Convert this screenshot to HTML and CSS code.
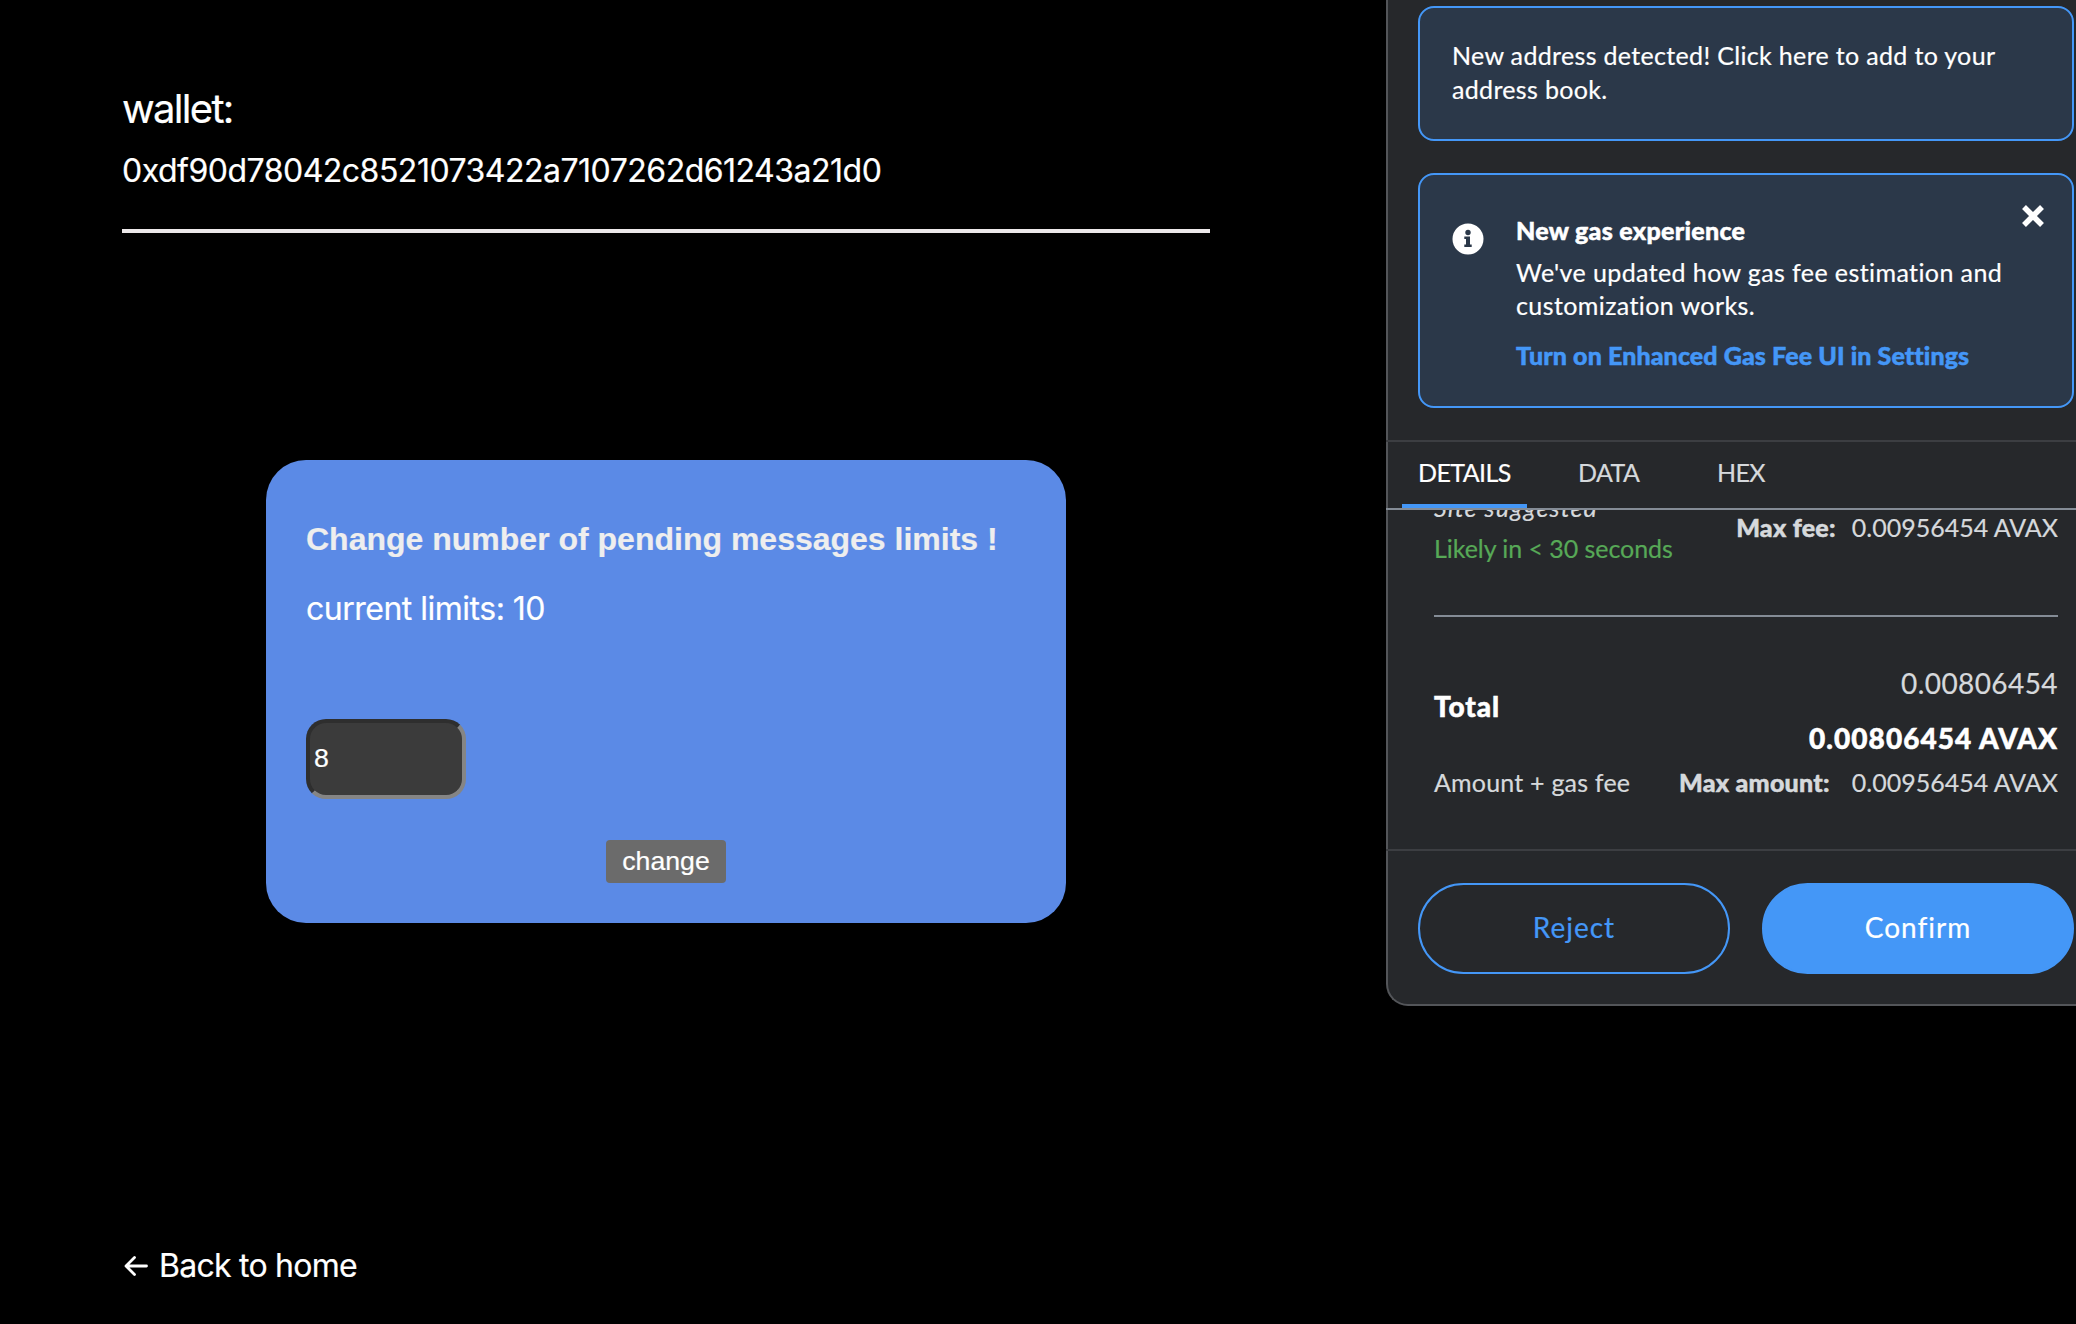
FILE: index.html
```html
<!DOCTYPE html>
<html lang="en">
<head>
<meta charset="utf-8">
<title>Change pending messages limit</title>
<link rel="stylesheet" href="styles.css">
</head>
<body>
<main class="page">
  <p class="wallet-label">wallet:</p>
  <p class="wallet-address">0xdf90d78042c8521073422a7107262d61243a21d0</p>
  <hr class="rule">
  <section class="card">
    <h1 class="card-title">Change number of pending messages limits !</h1>
    <p class="card-text">current limits: 10</p>
    <input class="limit-input" type="text" value="8">
    <button class="change-button">change</button>
  </section>
  <a class="back">
    <svg class="back-icon" viewBox="0 0 24 20"><path d="M10.500 1.500 2 10l8.500 8.500M2.500 10H22.500"/></svg>
    <span>Back to home</span>
  </a>
</main>
<aside class="panel">
  <div class="alert alert-address">New address detected! Click here to add to your<br>address book.</div>
  <div class="alert alert-gas">
    <svg class="info-icon" viewBox="0 0 32 32"><circle cx="16" cy="16" r="15.500" fill="#fff"/><circle cx="16" cy="9.500" r="2.700" fill="#2b3849"/><path fill="#2b3849" d="M12.300 13.500h5.700v8h1.700v2.500h-7.400v-2.500h1.700v-5.500h-1.700z"/></svg>
    <div class="gas-body">
      <h2 class="gas-title">New gas experience</h2>
      <p class="gas-text">We've updated how gas fee estimation and<br>customization works.</p>
      <a class="gas-link">Turn on Enhanced Gas Fee UI in Settings</a>
    </div>
    <svg class="close-icon" viewBox="0 0 24 24"><path d="M3 3l18 18M21 3l-18 18"/></svg>
  </div>
  <nav class="tabs">
    <a class="tab tab-active">DETAILS</a>
    <a class="tab tab-data">DATA</a>
    <a class="tab">HEX</a>
  </nav>
  <div class="details">
    <div class="fee-row">
      <div>
        <p class="suggested">Site suggested</p>
        <p class="likely">Likely in &lt; 30 seconds</p>
      </div>
      <p class="max max-fee"><b>Max fee:</b><span>0.00956454 AVAX</span></p>
    </div>
    <div class="total-row">
      <p class="total-label">Total</p>
      <div class="total-values">
        <p class="total-sub">0.00806454</p>
        <p class="total-main">0.00806454 AVAX</p>
      </div>
    </div>
    <div class="amount-row">
      <p class="amount-label">Amount + gas fee</p>
      <p class="max max-amount"><b>Max amount:</b><span>0.00956454 AVAX</span></p>
    </div>
  </div>
  <footer class="actions">
    <button class="action reject">Reject</button>
    <button class="action confirm">Confirm</button>
  </footer>
</aside>
</body>
</html>
```
FILE: styles.css
```css
* { box-sizing: border-box; }
body {
  margin: 0;
  width: 2076px;
  height: 1324px;
  display: flex;
  align-items: flex-start;
  overflow: hidden;
  background: #000;
  color: #fff;
  font-family: Inter, sans-serif;
}
p, h1, h2 { margin: 0; }
b { font-weight: 900; letter-spacing: 0.25px; }
b, .gas-title, .gas-link, .total-label, .total-main { -webkit-text-stroke: 0.5px currentColor; }
.page {
  flex: none;
  width: 1386px;
  height: 1324px;
  padding: 85px 176px 0 122px;
  -webkit-text-stroke: 0.2px currentColor;
}
.wallet-label { font-size: 40px; line-height: 48px; letter-spacing: -1.7px; }
.wallet-address { margin-top: 18px; font-size: 32px; line-height: 40px; letter-spacing: -0.5px; }
.rule { height: 4px; margin: 38px 0 0; border: 0; background: #ece8e9; }
.card {
  display: flex;
  flex-direction: column;
  align-items: flex-start;
  width: 800px;
  height: 463px;
  margin: 227px 0 0 144px;
  padding: 59px 40px 40px;
  border-radius: 40px;
  background: #5b8ae6;
}
.card-title { font: bold 32px/40px "Liberation Sans", sans-serif; color: #eee; }
.card-text { margin-top: 30px; font-size: 32px; line-height: 40px; letter-spacing: -0.5px; }
.limit-input {
  width: 160px;
  height: 80px;
  margin: 90px 0 0;
  padding: 0 4px 2px;
  border: 4px solid;
  border-color: #2e2e2e #858585 #858585 #2e2e2e;
  border-radius: 20px;
  background: #3b3b3b;
  color: #fff;
  font: 26.67px "Liberation Sans", sans-serif;
}
.change-button {
  align-self: center;
  width: 120px;
  height: 43px;
  margin: 41px 0 0;
  padding: 0;
  border: 0;
  border-radius: 4px;
  background: #6b6b6b;
  color: #fff;
  font: 26.67px "Liberation Sans", sans-serif;
}
.back {
  display: flex;
  align-items: center;
  gap: 11px;
  margin-top: 323px;
  font-size: 32px;
  line-height: 40px;
  letter-spacing: -0.75px;
}
.back-icon {
  width: 24px;
  height: 20px;
  margin-left: 2px;
  fill: none;
  stroke: #fff;
  stroke-width: 2.800;
  stroke-linecap: round;
  stroke-linejoin: round;
}
.panel {
  flex: none;
  width: 720px;
  height: 1006px;
  padding-top: 6px;
  border: solid #535559;
  border-width: 0 0 2px 2px;
  border-radius: 0 0 0 22px;
  background: #26282b;
  font-family: Lato, sans-serif;
  font-size: 25px;
  line-height: 34px;
  -webkit-text-stroke: 0.2px currentColor;
}
.alert {
  width: 656px;
  margin-left: 30px;
  border: 2px solid #4497f7;
  border-radius: 16px;
  background: #2b3849;
  letter-spacing: 0.33px;
}
.alert-address { height: 135px; padding: 30px 32px; }
.alert-gas { display: flex; height: 235px; margin-top: 32px; padding: 38px 27px 0 32px; }
.info-icon { flex: none; width: 32px; height: 32px; margin-top: 10px; }
.gas-body { flex: 1; margin-left: 32px; white-space: nowrap; }
.gas-title { font-size: 25px; line-height: 34px; font-weight: 900; letter-spacing: 0.3px; }
.gas-text { margin-top: 9px; line-height: 33px; letter-spacing: 0.4px; }
.gas-link { display: block; margin-top: 16px; color: #4497f7; font-weight: 900; letter-spacing: 0.1px; font-variant-ligatures: none; }
.close-icon { flex: none; width: 24px; height: 24px; margin-top: -9px; fill: none; stroke: #fff; stroke-width: 5.500; }
.tabs {
  display: flex;
  height: 70px;
  margin: 32px 0 0 -2px;
  padding-left: 16px;
  border-top: 2px solid #3c3e42;
  border-bottom: 2px solid #848c96;
  color: #d6d9dc;
  letter-spacing: -0.6px;
}
.tab { padding: 13px 0 0 16px; }
.tab-active { width: 125px; margin-right: 35px; border-bottom: 4px solid #4497f7; color: #fff; }
.tab-data { width: 139px; }
.details { width: 670px; height: 339px; padding: 0 0 0 46px; overflow: hidden; color: #d6d9dc; }
.fee-row {
  display: flex;
  justify-content: space-between;
  height: 127px;
  margin-top: -20px;
  border-bottom: 2px solid #848c96;
}
.suggested { font-style: italic; letter-spacing: 1.17px; }
.likely { margin-top: 7px; color: #57a957; letter-spacing: -0.05px; }
.max { display: flex; gap: 16px; }
.max-fee { margin-top: 20px; }
.max-amount { gap: 22px; }
.total-row { display: flex; justify-content: space-between; padding-top: 46px; font-size: 28px; line-height: 40px; }
.total-label { padding-top: 23px; font-weight: 900; letter-spacing: 0.9px; color: #fff; }
.total-values { text-align: right; }
.total-sub { letter-spacing: 0.42px; }
.total-main { margin-top: 15px; font-weight: 900; letter-spacing: 1.05px; color: #fff; }
.amount-row { display: flex; justify-content: space-between; margin-top: 7px; }
.amount-label { letter-spacing: 0.2px; }
.actions { display: flex; gap: 32px; margin-left: -2px; padding: 32px; border-top: 2px solid #3c3e42; }
.action {
  width: 312px;
  height: 91px;
  padding: 0 0 4px;
  border: 2px solid #4497f7;
  border-radius: 46px;
  font: 28px/40px Lato, sans-serif;
  letter-spacing: 1px;
}
.reject { background: none; color: #4497f7; }
.confirm { background: #4497f7; color: #fff; }
```
